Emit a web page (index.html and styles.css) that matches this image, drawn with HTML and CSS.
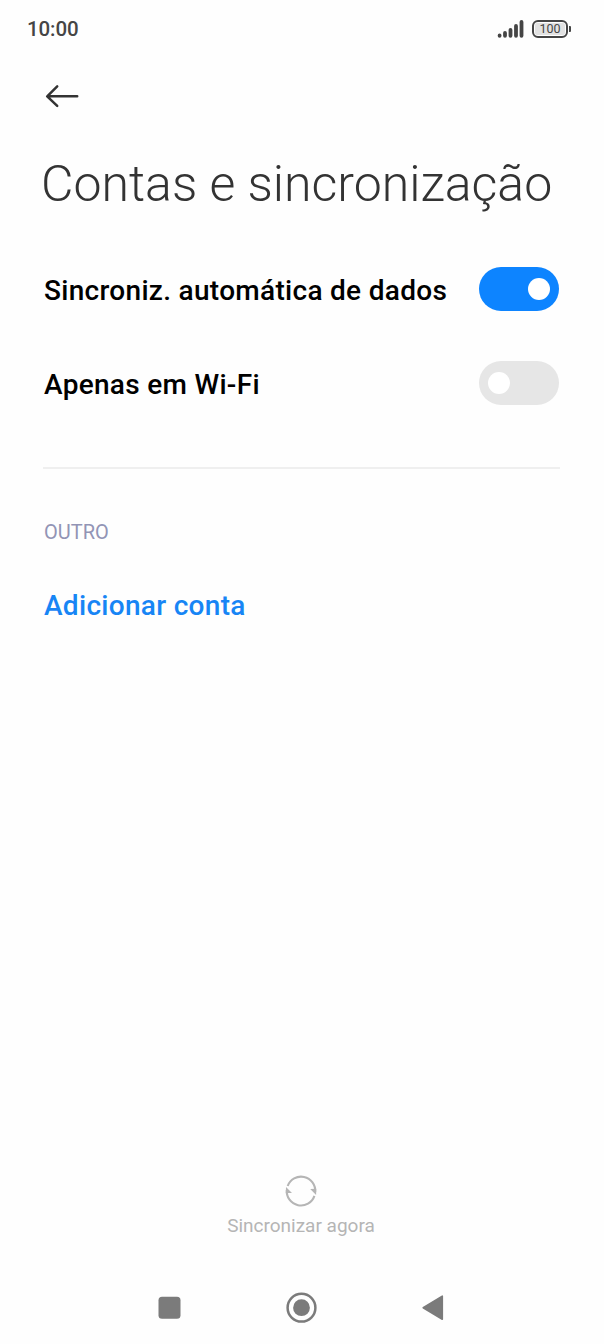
FILE: index.html
```html
<!DOCTYPE html>
<html lang="pt">
<head>
<meta charset="utf-8">
<title>Contas e sincronização</title>
<link rel="stylesheet" href="styles.css">
</head>
<body>
<div class="screen">
  <header class="status">
    <span class="time">10:00</span>
    <span class="indicators">
      <svg class="signal" width="28" height="20" viewBox="0 0 28 20" fill="none" stroke="#454545" stroke-width="3.8" stroke-linecap="round"><path d="M2.6 16.4v.4M8 14v2.8M13.5 11v5.8M19 7v9.8M24.5 3v13.8" /></svg>
      <span class="battery"><span class="cell"><span class="level">100</span></span><span class="tip"></span></span>
    </span>
  </header>
  <nav class="toolbar">
    <svg width="36" height="26" viewBox="0 0 36 26" fill="none" stroke="#333" stroke-width="2.5" stroke-linecap="round" stroke-linejoin="round"><path d="M33.2 13.3H3.5M13.2 3.3L3.2 13.3l10 9.6"/></svg>
  </nav>
  <h1 class="title">Contas e sincronização</h1>
  <main class="content">
    <div class="row"><span class="label">Sincroniz. automática de dados</span><span class="switch on"><span class="knob"></span></span></div>
    <div class="row"><span class="label">Apenas em Wi-Fi</span><span class="switch"><span class="knob"></span></span></div>
    <hr class="divider">
    <h2 class="section">OUTRO</h2>
    <a class="add">Adicionar conta</a>
  </main>
  <div class="sync">
    <svg width="34" height="34" viewBox="-17 -17 34 34" fill="none" stroke="#b5b5b5" stroke-width="2.1"><path d="M-13.3 -5A14.2 14.2 0 0 1 14.2 1"/><path d="M-14.2 -1A14.2 14.2 0 0 0 13.4 4.8"/><path d="M9.2 -1.9L15.3 -2.2L15.1 3.9zM-9 2.1L-15.2 2L-15 -4z" fill="#b5b5b5" stroke="none"/></svg>
    <span class="sync-label">Sincronizar agora</span>
  </div>
  <footer class="navbar">
    <svg width="24" height="34" viewBox="0 0 24 34"><rect x="1.5" y="5.7" width="22" height="22" rx="3.5" fill="#7b7b7b"/></svg>
    <svg width="32" height="34" viewBox="0 0 32 34"><circle cx="16.5" cy="16.7" r="13.9" fill="none" stroke="#7b7b7b" stroke-width="2.5"/><circle cx="16.5" cy="16.7" r="8.4" fill="#7b7b7b"/></svg>
    <svg width="24" height="34" viewBox="0 0 24 34"><path d="M2.2 16.7L21.3 5.1v23.2z" fill="#7b7b7b" stroke="#7b7b7b" stroke-width="1.6" stroke-linejoin="round"/></svg>
  </footer>
</div>
</body>
</html>
```
FILE: styles.css
```css
* { box-sizing: border-box; }
body { margin: 0; background: #fefefe; font-family: Roboto, sans-serif; }
.screen { width: 604px; height: 1344px; display: flex; flex-direction: column; }
.status { height: 58px; padding: 0 33px 0 27px; display: flex; align-items: center; justify-content: space-between; color: #454545; }
.time { font-size: 20.5px; font-weight: 500; line-height: 24px; letter-spacing: -.1px; }
.indicators { display: flex; align-items: center; gap: 7px; }
.battery { display: flex; align-items: center; gap: 1px; }
.cell { width: 36px; height: 18px; padding: 1px; border: 2px solid #454545; border-radius: 6px; }
.level { display: block; height: 12px; border-radius: 2px; background: #e2e2e2; font-size: 12.5px; line-height: 12px; font-weight: 400; text-align: center; }
.tip { width: 2px; height: 6px; border-radius: 0 1px 1px 0; background: #454545; }
.toolbar { height: 76px; padding-left: 44px; display: flex; align-items: center; }
.title { margin: 0; height: 108px; padding-left: 41px; font-size: 50px; font-weight: 300; line-height: 101px; color: #333; white-space: nowrap; }
.content { padding: 0 44px 0 43px; }
.row { height: 94px; display: flex; align-items: center; justify-content: space-between; }
.label { padding: 3px 0 0 1px; font-size: 28px; font-weight: 500; line-height: 34px; letter-spacing: .3px; color: #000; white-space: nowrap; }
.switch { width: 80px; height: 44px; margin: 0 1px 1px 0; padding: 0 9px; display: flex; align-items: center; border-radius: 22px; background: #e6e6e6; }
.switch.on { justify-content: flex-end; background: #0d84ff; }
.knob { width: 22px; height: 22px; border-radius: 50%; background: #fff; }
.divider { height: 2px; margin: 37px 0 0; border: 0; background: #efefef; }
.section { margin: 47px 0 0; padding-left: 1px; font-size: 20px; font-weight: 400; line-height: 32px; color: #9294b5; }
.add { display: block; margin-top: 38px; padding-left: 1px; font-size: 28px; font-weight: 500; line-height: 40px; letter-spacing: .3px; color: #1785f5; }
.sync { margin-top: auto; display: flex; flex-direction: column; align-items: center; padding-right: 2px; color: #b5b5b5; }
.sync-label { margin-top: 5px; font-size: 19px; line-height: 26px; }
.navbar { height: 72px; margin-top: 33px; padding: 0 159px 0 157px; display: flex; align-items: center; justify-content: space-between; }
```
